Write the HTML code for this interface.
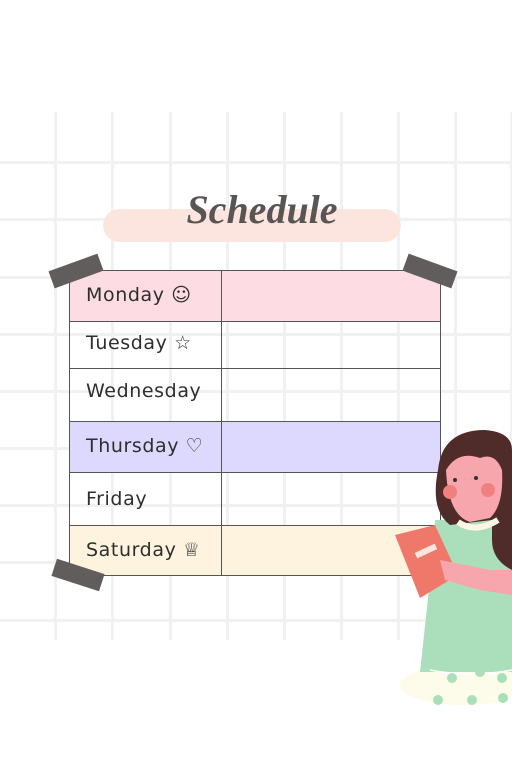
<!DOCTYPE html>
<html><head><meta charset="utf-8"><style>
html,body{margin:0;padding:0}
body{width:512px;height:768px;position:relative;background:#fff;overflow:hidden;font-family:"Liberation Sans",sans-serif}
.v{position:absolute;top:112px;height:528px;width:3px;background:#f1f1f1}
.h{position:absolute;left:0;width:512px;height:3px;background:#f1f1f1}
.row{position:absolute;left:69px;width:372px;border-top:1px solid #555;}
.lab{position:absolute;left:86px;font-family:"DejaVu Sans",sans-serif;font-size:19px;color:#2e2e2e;letter-spacing:0.6px}
.tape{position:absolute;background:#625d5d;height:18px}
</style></head><body>
<div class="v" style="left:54px"></div><div class="v" style="left:111px"></div><div class="v" style="left:169px"></div><div class="v" style="left:226px"></div><div class="v" style="left:283px"></div><div class="v" style="left:340px"></div><div class="v" style="left:397px"></div><div class="v" style="left:454px"></div><div class="v" style="left:510px"></div>
<div class="h" style="top:161px"></div><div class="h" style="top:218px"></div><div class="h" style="top:276px"></div><div class="h" style="top:333px"></div><div class="h" style="top:390px"></div><div class="h" style="top:447px"></div><div class="h" style="top:504px"></div><div class="h" style="top:561px"></div><div class="h" style="top:619px"></div>

<div style="position:absolute;left:103px;top:209px;width:298px;height:33px;border-radius:17px;background:#fde5df"></div>
<div style="position:absolute;left:0;width:524px;top:186px;text-align:center;font-family:'Liberation Serif',serif;font-style:italic;font-weight:bold;font-size:40px;color:#5a5555">Schedule</div>

<div style="position:absolute;left:69px;top:270px;width:372px;height:51px;background:#fddde3"></div>
<div style="position:absolute;left:69px;top:421px;width:372px;height:51px;background:#ddd8fd"></div>
<div style="position:absolute;left:69px;top:525px;width:372px;height:51px;background:#fdf3de"></div>
<div style="position:absolute;left:69px;top:270px;width:372px;height:306px;border:1px solid #555;box-sizing:border-box"></div>
<div style="position:absolute;left:221px;top:270px;width:1px;height:306px;background:#555"></div>
<div class="row" style="top:321px"></div><div class="row" style="top:368px"></div><div class="row" style="top:421px"></div><div class="row" style="top:472px"></div><div class="row" style="top:525px"></div>

<div class="lab" style="top:284px">Monday ☺</div>
<div class="lab" style="top:332px">Tuesday ☆</div>
<div class="lab" style="top:380px">Wednesday</div>
<div class="lab" style="top:435px">Thursday ♡</div>
<div class="lab" style="top:488px">Friday</div>
<div class="lab" style="top:539px">Saturday ♕</div>

<div class="tape" style="left:50px;top:262px;width:52px;transform:rotate(-20deg)"></div>
<div class="tape" style="left:404px;top:262px;width:52px;transform:rotate(20deg)"></div>
<div class="tape" style="left:53px;top:566px;width:50px;transform:rotate(18deg)"></div>

<svg style="position:absolute;left:380px;top:420px" width="132" height="290" viewBox="0 0 132 290">
<ellipse cx="85" cy="265" rx="65" ry="20" fill="#fdfbea"/>
<path d="M50 160 L132 160 L132 252 L40 252 Z" fill="#abdfbb"/>
<path d="M50 250 Q90 258 132 250" stroke="#fff" stroke-width="1.5" fill="none"/>
<circle cx="72" cy="258" r="5" fill="#abdfbb"/><circle cx="100" cy="252" r="5" fill="#abdfbb"/><circle cx="122" cy="258" r="5" fill="#abdfbb"/><circle cx="58" cy="280" r="5" fill="#abdfbb"/><circle cx="92" cy="280" r="5" fill="#abdfbb"/><circle cx="123" cy="278" r="5" fill="#abdfbb"/>
<path d="M55 100 L132 100 L132 170 L50 170 Z" fill="#abdfbb"/>
<path d="M58 50 Q62 10 105 10 Q132 12 132 30 L132 150 Q112 140 112 120 L112 100 L70 105 Q50 90 58 50Z" fill="#4f2b29"/>
<path d="M66 50 Q78 30 100 38 Q115 32 122 50 Q124 85 110 98 L90 102 Q68 95 66 50Z" fill="#f6a6ac"/>
<circle cx="70" cy="72" r="7" fill="#f08080"/><circle cx="108" cy="70" r="7" fill="#f08080"/>
<circle cx="75" cy="60" r="2" fill="#333"/><circle cx="96" cy="58" r="2" fill="#333"/>
<path d="M78 102 Q95 114 118 100" stroke="#fff6e6" stroke-width="6" fill="none"/>
<path d="M15 115 L55 105 L78 155 L40 178 Z" fill="#f0786a"/>
<path d="M60 140 L110 150 L132 150 L132 175 L100 170 L65 160Z" fill="#f6a6ac"/>
<rect x="35" y="128" width="22" height="6" fill="#fde5df" transform="rotate(-25 46 131)"/>
</svg>
</body></html>
